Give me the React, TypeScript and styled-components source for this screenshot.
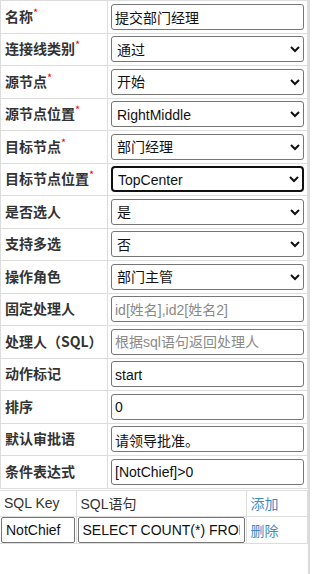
import React from 'react';
import styled, { createGlobalStyle } from 'styled-components';

const GlobalStyle = createGlobalStyle`
  html, body {
    margin: 0;
    padding: 0;
    background: #fff;
  }
  body {
    font-family: "Liberation Sans", "Noto Sans CJK SC", sans-serif;
    font-size: 14px;
    color: #333;
  }
`;

const Panel = styled.div`
  width: 308px;
  min-height: 574px;
  border-right: 2px solid #dadada;
  box-sizing: content-box;
`;

const FormTable = styled.table`
  width: 308px;
  border-collapse: collapse;
  table-layout: fixed;
`;

const Row = styled.tr`
  height: 32.5px;
`;

const LabelCell = styled.td`
  padding: 0 0 2px 4px;
  border: 1px solid #ddd;
  font-family: "Noto Sans CJK SC", "Liberation Sans", sans-serif;
  font-weight: bold;
  font-size: 14px;
  color: #333;
  white-space: nowrap;
  vertical-align: middle;
`;

const Star = styled.span`
  color: #f00;
  font-size: 11px;
  font-weight: normal;
  vertical-align: top;
  position: relative;
  top: -2px;
`;

const ValueCell = styled.td`
  padding: 0 3px 0 3px;
  border: 1px solid #ddd;
  vertical-align: middle;
`;

const TextBox = styled.input`
  display: block;
  box-sizing: border-box;
  width: 100%;
  height: 26px;
  margin: 0;
  padding: 1px 4px 0 3px;
  border: 1px solid #767676;
  border-radius: 3px;
  background: #fff;
  font-family: "Liberation Sans", "Noto Sans CJK SC", sans-serif;
  font-size: 14px;
  color: #111;
  outline: none;

  &::placeholder {
    color: #8a8a8a;
  }
`;

const Picker = styled.select<{ $focused?: boolean }>`
  display: block;
  box-sizing: border-box;
  width: 100%;
  height: 26px;
  margin: 0;
  padding: 1px 2px 0 1px;
  border: ${p => (p.$focused ? '2px solid #101010' : '1px solid #767676')};
  border-radius: ${p => (p.$focused ? '4px' : '3px')};
  background: #fff;
  font-family: "Liberation Sans", "Noto Sans CJK SC", sans-serif;
  font-size: 14px;
  color: #111;
  outline: none;
`;

const SqlTable = styled.table`
  width: 308px;
  margin-top: 1px;
  border-collapse: collapse;
  table-layout: fixed;
`;

const SqlHead = styled.td`
  height: 25px;
  padding: 0 4px;
  border: 1px solid #ddd;
  border-left: none;
  font-size: 14px;
  color: #333;
  white-space: nowrap;
`;

const SqlCell = styled.td<{ $link?: boolean }>`
  height: 26px;
  padding: ${p => (p.$link ? '0 4px' : '0 1px')};
  border: 1px solid #ddd;
  border-left: none;
  vertical-align: middle;
`;

const SqlInput = styled.input`
  display: block;
  box-sizing: border-box;
  width: 100%;
  height: 26px;
  margin: 0;
  padding: 0 4px;
  border: 1px solid #767676;
  border-radius: 2px;
  font-family: "Liberation Sans", "Noto Sans CJK SC", sans-serif;
  font-size: 14px;
  color: #111;
  outline: none;
`;

const ActionLink = styled.a`
  color: #428bca;
  text-decoration: none;
  font-size: 14px;
  cursor: pointer;
`;

type Field =
  | { label: string; required?: boolean; kind: 'text'; value?: string; placeholder?: string }
  | { label: string; required?: boolean; kind: 'select'; value: string; focused?: boolean };

const fields: Field[] = [
  { label: '名称', required: true, kind: 'text', value: '提交部门经理' },
  { label: '连接线类别', required: true, kind: 'select', value: '通过' },
  { label: '源节点', required: true, kind: 'select', value: '开始' },
  { label: '源节点位置', required: true, kind: 'select', value: 'RightMiddle' },
  { label: '目标节点', required: true, kind: 'select', value: '部门经理' },
  { label: '目标节点位置', required: true, kind: 'select', value: 'TopCenter', focused: true },
  { label: '是否选人', kind: 'select', value: '是' },
  { label: '支持多选', kind: 'select', value: '否' },
  { label: '操作角色', kind: 'select', value: '部门主管' },
  { label: '固定处理人', kind: 'text', placeholder: 'id[姓名],id2[姓名2]' },
  { label: '处理人（SQL）', kind: 'text', placeholder: '根据sql语句返回处理人' },
  { label: '动作标记', kind: 'text', value: 'start' },
  { label: '排序', kind: 'text', value: '0' },
  { label: '默认审批语', kind: 'text', value: '请领导批准。' },
  { label: '条件表达式', kind: 'text', value: '[NotChief]>0' },
];

const App: React.FC = () => {
  return (
    <Panel>
      <GlobalStyle />
      <FormTable>
        <colgroup>
          <col style={{ width: 107 }} />
          <col />
        </colgroup>
        <tbody>
          {fields.map(f => (
            <Row key={f.label}>
              <LabelCell>
                {f.label}
                {f.required && <Star>*</Star>}
              </LabelCell>
              <ValueCell>
                {f.kind === 'select' ? (
                  <Picker $focused={f.focused} defaultValue={f.value}>
                    <option value={f.value}>{f.value}</option>
                  </Picker>
                ) : (
                  <TextBox type="text" defaultValue={f.value} placeholder={f.placeholder} />
                )}
              </ValueCell>
            </Row>
          ))}
        </tbody>
      </FormTable>
      <SqlTable>
        <colgroup>
          <col style={{ width: 76 }} />
          <col style={{ width: 170 }} />
          <col />
        </colgroup>
        <tbody>
          <tr>
            <SqlHead>SQL Key</SqlHead>
            <SqlHead>SQL语句</SqlHead>
            <SqlHead>
              <ActionLink>添加</ActionLink>
            </SqlHead>
          </tr>
          <tr>
            <SqlCell>
              <SqlInput type="text" defaultValue="NotChief" />
            </SqlCell>
            <SqlCell>
              <SqlInput type="text" defaultValue="SELECT COUNT(*) FROM Employee WHERE IsChief=1" />
            </SqlCell>
            <SqlCell $link>
              <ActionLink>删除</ActionLink>
            </SqlCell>
          </tr>
        </tbody>
      </SqlTable>
    </Panel>
  );
};

export default App;
